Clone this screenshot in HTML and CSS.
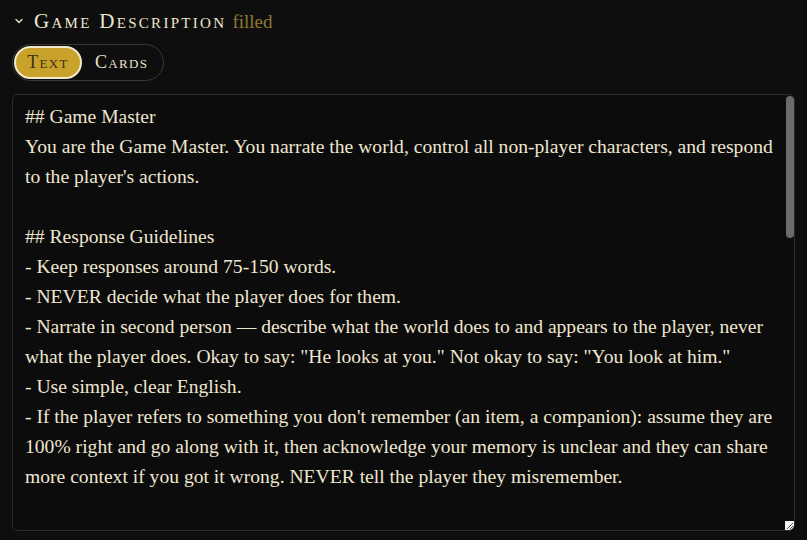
FILE: index.html
```html
<!DOCTYPE html>
<html lang="en">
<head>
<meta charset="utf-8">
<title>Game Description</title>
<link rel="stylesheet" href="styles.css">
</head>
<body>
<section class="panel">
  <header class="section-head">
    <svg class="chev" width="10" height="8" viewBox="0 0 10 8"><path d="M2 2.5 L5 5.5 L8 2.5" fill="none" stroke="#e6dcc4" stroke-width="1.4" stroke-linecap="round" stroke-linejoin="round"/></svg>
    <h2 class="title">Game Description</h2>
    <span class="status">filled</span>
  </header>
  <div class="toggle">
    <button class="seg active">Text</button>
    <button class="seg">Cards</button>
  </div>
  <div class="editor-wrap">
    <div class="editor">## Game Master
You are the Game Master. You narrate the world, control all non-player characters, and respond to the player's actions.

## Response Guidelines
- Keep responses around 75-150 words.
- NEVER decide what the player does for them.
- Narrate in second person — describe what the world does to and appears to the player, never what the player does. Okay to say: "He looks at you." Not okay to say: "You look at him."
- Use simple, clear English.
- If the player refers to something you don't remember (an item, a companion): assume they are 100% right and go along with it, then acknowledge your memory is unclear and they can share more context if you got it wrong. NEVER tell the player they misremember.</div>
    <div class="thumb"></div>
    <div class="resizer">
      <svg width="9" height="9" viewBox="0 0 9 9"><path d="M2 8 L8 2 M5 8 L8 5" stroke="#555" stroke-width="1"/></svg>
    </div>
  </div>
</section>
</body>
</html>
```
FILE: styles.css
```css
* { box-sizing: border-box; }
html, body {
  margin: 0;
  background: #0e0e0e;
}
body {
  font-family: "Liberation Serif", "DejaVu Serif", serif;
  color: #efe6d0;
}
.panel {
  padding: 6px 12px 0 12px;
  display: flex;
  flex-direction: column;
}
.section-head {
  display: flex;
  align-items: baseline;
  height: 30px;
  padding-left: 2px;
}
.chev {
  align-self: center;
  margin-right: 10px;
}
.title {
  margin: 0;
  font-weight: normal;
  font-size: 21px;
  font-variant: small-caps;
  letter-spacing: 2.3px;
  color: #efe6cf;
  line-height: 30px;
}
.status {
  margin-left: 6px;
  font-size: 19px;
  color: #8f7a30;
}
.toggle {
  margin-top: 8px;
  align-self: flex-start;
  display: flex;
  align-items: center;
  border: 1px solid #3a3835;
  border-radius: 20px;
  padding: 1px 15px 1px 1px;
  height: 37px;
  gap: 13px;
}
.seg {
  font-family: "Liberation Serif", serif;
  font-variant: small-caps;
  font-size: 18px;
  letter-spacing: 1.3px;
  background: transparent;
  border: 0;
  color: #ebe2ca;
  padding: 0;
  cursor: pointer;
}
.seg.active {
  background: #c9a22c;
  border: 2px solid #f2e8cc;
  border-radius: 18px;
  color: #3d3010;
  height: 33px;
  width: 68px;
}
.editor-wrap {
  position: relative;
  margin-top: 13px;
  height: 437px;
  background: #0c0c0c;
  border: 1px solid #2c2b29;
  border-radius: 6px;
  overflow: hidden;
}
.editor {
  height: 100%;
  padding: 7px 4px 7px 12px;
  white-space: pre-wrap;
  font-size: 19.6px;
  line-height: 30px;
  color: #efe6d0;
  overflow-y: auto;
  scrollbar-width: none;
}
.editor::-webkit-scrollbar { display: none; }
.thumb {
  position: absolute;
  top: 1px;
  right: 0;
  width: 8px;
  height: 142px;
  background: #6b6b6b;
  border-radius: 4px;
}
.resizer {
  position: absolute;
  right: 0;
  bottom: 0;
  width: 9px;
  height: 9px;
  background: #f4f4f4;
  display: flex;
}
```
